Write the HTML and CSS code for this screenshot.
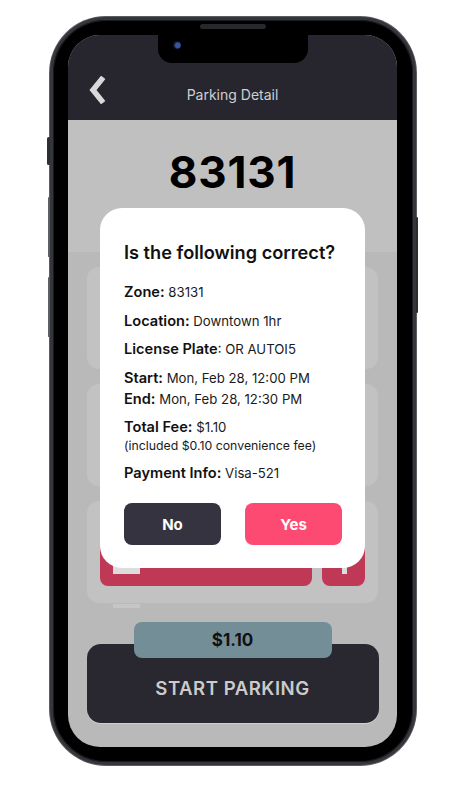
FILE: index.html
```html
<!DOCTYPE html>
<html lang="en">
<head>
<meta charset="utf-8">
<title>Parking Detail</title>
<link rel="stylesheet" href="styles.css">
</head>
<body>
<div class="stage">
  <div class="phone">
    <span class="side-btn mute"></span>
    <span class="side-btn vol-up"></span>
    <span class="side-btn vol-down"></span>
    <span class="side-btn power"></span>
    <span class="speaker"></span>
    <div class="screen">
      <div class="notch"><span class="camera"></span></div>
      <header class="header">
        <svg class="back" width="20" height="28" viewBox="0 0 20 28" aria-hidden="true">
          <path d="M14.5 3.5 L6 14 L14.5 24.5" fill="none" stroke="#d9d9d9" stroke-width="5.5" stroke-linecap="square" stroke-linejoin="miter"/>
        </svg>
        <h1 class="title">Parking Detail</h1>
      </header>
      <section class="hero">
        <div class="zone">83131</div>
      </section>
      <main class="cards">
        <div class="card"></div>
        <div class="card"></div>
        <div class="card card-actions">
          <div class="red-btn wide"><span class="red-icon"></span></div>
          <div class="red-btn narrow"><span class="red-icon small"></span></div>
        </div>
        <span class="peek"></span>
      </main>
      <footer class="footer">
        <div class="price">$1.10</div>
        <button class="start">START PARKING</button>
      </footer>

      <div class="modal">
        <h2 class="modal-title">Is the following correct?</h2>
        <div class="rows">
          <p class="row"><b>Zone:</b> 83131</p>
          <p class="row"><b>Location:</b> Downtown 1hr</p>
          <p class="row"><b>License Plate</b>: OR AUTOI5</p>
          <div class="group">
            <p class="row"><b>Start:</b> Mon, Feb 28, 12:00 PM</p>
            <p class="row"><b>End:</b> Mon, Feb 28, 12:30 PM</p>
          </div>
          <div class="group">
            <p class="row"><b>Total Fee:</b> $1.10</p>
            <p class="row note">(included $0.10 convenience fee)</p>
          </div>
          <p class="row"><b>Payment Info:</b> Visa-521</p>
        </div>
        <div class="actions">
          <button class="btn no">No</button>
          <button class="btn yes">Yes</button>
        </div>
      </div>
    </div>
  </div>
</div>
</body>
</html>
```

FILE: styles.css
```css
* { box-sizing: border-box; }
html, body { margin: 0; padding: 0; background: #ffffff; }
body { font-family: Inter, "Noto Sans", "Liberation Sans", sans-serif; }

.stage {
  width: 466px;
  height: 785px;
  padding: 17px 0 0 50px;
}

.phone {
  position: relative;
  width: 366px;
  height: 748px;
  border-radius: 56px;
  background: #000;
  border: 3px solid #34363a;
  box-shadow: inset 0 0 0 1px #1a1b1e, 0 0 0 1px #5a5d62;
  padding: 15px 16px 15px 15px;
}

.side-btn {
  position: absolute;
  width: 3px;
  border-radius: 2px;
}
.mute { left: -6px; top: 117px; height: 28px; background: #2c2f33; }
.vol-up { left: -5px; top: 177px; height: 60px; background: #5d6066; width: 1px; }
.vol-down { left: -5px; top: 257px; height: 60px; background: #5d6066; width: 1px; }
.power { right: -5px; top: 197px; height: 96px; background: #2b2d31; width: 2px; }

.speaker {
  position: absolute;
  left: 147px;
  top: 4px;
  width: 66px;
  height: 5px;
  border-radius: 3px;
  background: #26282b;
}

.screen {
  position: relative;
  width: 329px;
  height: 712px;
  border-radius: 32px;
  overflow: hidden;
  background: #b9b9b9;
  display: flex;
  flex-direction: column;
}

.notch {
  position: absolute;
  left: 90px;
  top: 0;
  width: 150px;
  height: 28px;
  background: #000;
  border-radius: 0 0 14px 14px;
  z-index: 3;
}
.camera {
  position: absolute;
  left: 15px;
  top: 6px;
  width: 8px;
  height: 8px;
  border-radius: 50%;
  background: radial-gradient(circle at 60% 55%, #3a55a0 0 35%, #0e1424 60%);
}

.header {
  position: relative;
  height: 85px;
  flex: none;
  background: #27262e;
  display: flex;
  align-items: flex-end;
  justify-content: center;
  padding-bottom: 16px;
}
.back {
  position: absolute;
  left: 19px;
  top: 41px;
}
.title {
  margin: 0;
  font-size: 14px;
  font-weight: 400;
  color: #cfcfd2;
  line-height: 18px;
}

.hero {
  height: 132px;
  flex: none;
  background: #c0c0c0;
  display: flex;
  justify-content: center;
  padding-top: 26px;
}
.zone {
  font-size: 44px;
  font-weight: 700;
  color: #000;
  line-height: 52px;
  letter-spacing: 0.8px;
}

.cards {
  position: relative;
  display: flex;
  flex-direction: column;
  gap: 15px;
  padding: 15px 19px 0 19px;
}
.card {
  height: 102px;
  border-radius: 12px;
  background: #c2c2c2;
}
.card-actions {
  display: flex;
  align-items: flex-end;
  gap: 10px;
  padding: 0 13px 17px 13px;
}
.red-btn {
  position: relative;
  height: 52px;
  background: #bf3957;
  border-radius: 8px;
}
.red-btn.wide { width: 212px; }
.red-btn.narrow { width: 43px; }
.red-icon {
  position: absolute;
  left: 13px;
  top: 32px;
  width: 27px;
  height: 8px;
  background: #dcdcdc;
}
.red-icon.small {
  left: 20px;
  width: 5px;
}
.peek {
  position: absolute;
  left: 45px;
  bottom: -5px;
  width: 27px;
  height: 4px;
  background: #c6c6c6;
}

.footer {
  display: flex;
  flex-direction: column;
  align-items: center;
  padding-top: 19px;
}
.price {
  position: relative;
  z-index: 1;
  width: 198px;
  height: 36px;
  border-radius: 8px;
  background: #748e97;
  color: #111;
  font-size: 17px;
  font-weight: 700;
  display: flex;
  align-items: center;
  justify-content: center;
  padding-bottom: 1px;
}
.start {
  margin-top: -14px;
  width: 292px;
  height: 79px;
  border: none;
  border-radius: 14px;
  background: #29272f;
  color: #cbcbcb;
  font-family: inherit;
  font-size: 18.6px;
  font-weight: 600;
  letter-spacing: 0.5px;
  padding-top: 10px;
  box-shadow: 0 1px 0 #d0d0d0;
}

.modal {
  position: absolute;
  left: 32px;
  top: 173px;
  width: 265px;
  height: 360px;
  background: #fff;
  border-radius: 22px;
  padding: 33px 20px 0 24px;
  z-index: 4;
}
.modal-title {
  margin: 0;
  font-size: 18.2px;
  font-weight: 600;
  color: #111;
  line-height: 22px;
  white-space: nowrap;
}
.rows {
  margin-top: 20px;
  display: flex;
  flex-direction: column;
  gap: 10.5px;
}
.group { display: flex; flex-direction: column; gap: 3px; }
.row {
  margin: 0;
  height: 18px;
  font-size: 13.2px;
  color: #1a1a1a;
  line-height: 18px;
  white-space: nowrap;
}
.row b {
  font-size: 14.6px;
  font-weight: 600;
  color: #111;
  line-height: 18px;
}
.row.note { font-size: 12.3px; line-height: 14px; height: 14px; }

.actions {
  margin-top: 21.5px;
  display: flex;
  justify-content: space-between;
  padding-right: 3px;
}
.btn {
  width: 97px;
  height: 42px;
  border: none;
  border-radius: 8px;
  color: #fff;
  font-family: inherit;
  font-size: 15px;
  font-weight: 700;
}
.btn.no { background: #35333f; }
.btn.yes { background: #fd4a73; }
```
